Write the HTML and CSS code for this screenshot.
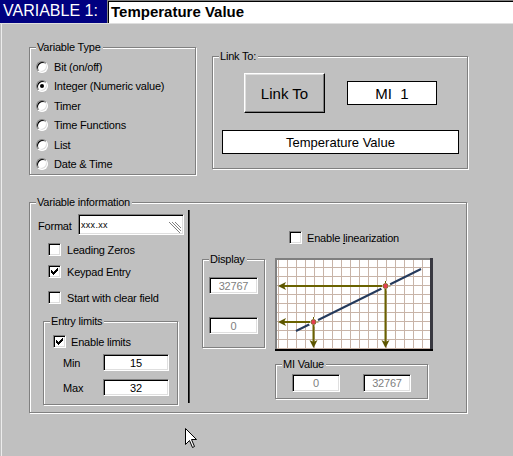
FILE: index.html
```html
<!DOCTYPE html>
<html lang="en">
<head>
  <meta charset="UTF-8" />
  <title>Variable 1</title>
  <link rel="stylesheet" href="styles.css">
</head>
<body>

  <div class="titlebar">
    <div class="title-tag">VARIABLE 1:</div>
    <div class="title-field">Temperature Value</div>
  </div>

  <div class="panel">
    <div class="top-row">
      <div class="group type-group">
        <span class="group-label">Variable Type</span>
        <div class="radio-list">
          <div class="radio-row"><span class="radio"></span>Bit (on/off)</div>
          <div class="radio-row"><span class="radio checked"></span>Integer (Numeric value)</div>
          <div class="radio-row"><span class="radio"></span>Timer</div>
          <div class="radio-row"><span class="radio"></span>Time Functions</div>
          <div class="radio-row"><span class="radio"></span>List</div>
          <div class="radio-row"><span class="radio"></span>Date &amp; Time</div>
        </div>
      </div>

      <div class="group link-group">
        <span class="group-label">Link To:</span>
        <div class="link-row">
          <button class="btn">Link To</button>
          <div class="flat-field mi-field">MI  1</div>
        </div>
        <div class="flat-field name-field">Temperature Value</div>
      </div>
    </div>

    <div class="group info-group">
      <span class="group-label">Variable information</span>

      <div class="info-left">
        <div class="format-row">
          <span class="format-label">Format</span>
          <div class="sunken format-field">
            <span>xxx.xx</span>
            <svg class="grip" width="14" height="11" viewBox="0 0 14 11">
              <path d="M2 0L13 11M5 0L14 9M8 0L14 6" stroke="#808080" fill="none"/>
              <path d="M3 0L14 11M6 0L14 8" stroke="#fff" fill="none"/>
            </svg>
          </div>
        </div>

        <div class="check-row opt-leading">
          <span class="check"></span><span>Leading Zeros</span>
        </div>
        <div class="check-row opt-keypad">
          <span class="check"><svg width="7" height="7" viewBox="0 0 7 7"><path d="M6 0h1v1h-1zM5 1h2v1h-2zM0 2h1v1h-1zM4 2h3v1h-3zM0 3h2v1h-2zM3 3h3v1h-3zM0 4h5v1h-5zM1 5h3v1h-3zM2 6h1v1h-1z"/></svg></span><span>Keypad Entry</span>
        </div>
        <div class="check-row opt-clear">
          <span class="check"></span><span>Start with clear field</span>
        </div>

        <div class="group limits-group">
          <span class="group-label">Entry limits</span>
          <div class="check-row opt-limits">
            <span class="check"><svg width="7" height="7" viewBox="0 0 7 7"><path d="M6 0h1v1h-1zM5 1h2v1h-2zM0 2h1v1h-1zM4 2h3v1h-3zM0 3h2v1h-2zM3 3h3v1h-3zM0 4h5v1h-5zM1 5h3v1h-3zM2 6h1v1h-1z"/></svg></span><span>Enable limits</span>
          </div>
          <div class="limit-row">
            <span class="limit-label">Min</span>
            <div class="sunken limit-field">15</div>
          </div>
          <div class="limit-row">
            <span class="limit-label">Max</span>
            <div class="sunken limit-field">32</div>
          </div>
        </div>
      </div>

      <div class="separator"></div>

      <div class="info-right">
        <div class="check-row lin-row">
          <span class="check"></span><span>Enable <u>l</u>inearization</span>
        </div>

        <div class="chart-row">
          <div class="group display-group">
            <span class="group-label">Display</span>
            <div class="sunken disabled">32767</div>
            <div class="sunken disabled">0</div>
          </div>

          <div class="chart-col">
            <svg class="chart" width="158" height="93" viewBox="0 0 158 93">
              <defs>
                <pattern id="grid" x="3" y="0" width="9" height="9" patternUnits="userSpaceOnUse">
                  <path d="M0.5 0V9M0 0.5H9" stroke="#c8b4a8" fill="none"/>
                </pattern>
              </defs>
              <rect width="158" height="93" fill="#fff"/>
              <rect x="2" y="2" width="153" height="89" fill="url(#grid)"/>
              <line x1="21" y1="73" x2="146" y2="11" stroke="#243a5c" stroke-width="2"/>
              <circle cx="110.5" cy="28" r="5" fill="#fff"/>
              <circle cx="38.5" cy="64" r="5" fill="#fff"/>
              <path d="M9 28H107M110.5 31V84M9 64H35M38.5 67V84" stroke="#6a6200" stroke-width="2" fill="none"/>
              <g fill="#5c5600">
                <path d="M3 28L11 24L9 28L11 32Z"/>
                <path d="M3 64L11 60L9 64L11 68Z"/>
                <path d="M110.5 90L106.5 82L110.5 84L114.5 82Z"/>
                <path d="M38.5 90L34.5 82L38.5 84L42.5 82Z"/>
              </g>
              <path d="M110.5 23V25M110.5 31V33M105.5 28H107.5M113.5 28H115.5M38.5 59V61M38.5 67V69M33.5 64H35.5M41.5 64H43.5" stroke="#6a6200" fill="none"/>
              <circle cx="110.5" cy="28" r="2.5" fill="#e83c50" stroke="#8a6a30"/>
              <circle cx="38.5" cy="64" r="2.5" fill="#e83c50" stroke="#8a6a30"/>
              <rect x="0" y="0" width="158" height="2" fill="#808080"/>
              <rect x="0" y="0" width="2" height="93" fill="#808080"/>
              <rect x="155" y="0" width="3" height="93" fill="#383840"/>
              <rect x="0" y="91" width="158" height="2" fill="#000"/>
            </svg>

            <div class="group mi-group">
              <span class="group-label">MI Value</span>
              <div class="sunken disabled">0</div>
              <div class="sunken disabled">32767</div>
            </div>
          </div>
        </div>
      </div>
    </div>
  </div>

  <svg class="cursor" width="13" height="21" viewBox="0 0 13 21">
    <path d="M0.5 0.5V16.5L4.5 12.5L7.5 19.5L9.5 18.5L6.5 11.5H11.5Z" fill="#fff" stroke="#000"/>
  </svg>

</body>
</html>
```

FILE: styles.css
```css
* {
  box-sizing: border-box;
}
body {
  margin: 0;
  width: 513px;
  height: 456px;
  overflow: hidden;
  position: relative;
  background: #c0c0c0;
  color: #000;
  font-family: "Liberation Sans", Arial, sans-serif;
  font-size: 11px;
  letter-spacing: -0.2px;
}

/* header */
.titlebar {
  display: flex;
  height: 24px;
  border-bottom: 1px solid #dfdfdf;
}
.title-tag {
  width: 107px;
  padding-left: 3px;
  background: #000080;
  color: #fff;
  font-size: 16px;
  line-height: 21px;
  letter-spacing: 0;
}
.title-field {
  flex: 1;
  padding-left: 3px;
  background: #fff;
  border-top: 1px solid #808080;
  border-left: 1px solid #808080;
  box-shadow: inset 1px 1px 0 #000;
  font-size: 15px;
  font-weight: bold;
  line-height: 21px;
  letter-spacing: 0;
}

.panel {
  height: 432px;
  padding: 23px 0 0 29px;
  box-shadow: inset 1px 0 0 #c0c0c0, inset 2px 0 0 #ececec;
}

/* etched group boxes */
.group {
  position: relative;
  flex: none;
  border: 1px solid #808080;
  box-shadow: 1px 1px 0 #fff, inset 1px 1px 0 #fff;
}
.group-label {
  position: absolute;
  top: -7px;
  left: 6px;
  padding: 0 2px 0 1px;
  background: #c0c0c0;
  line-height: 13px;
  white-space: nowrap;
}

.top-row {
  display: flex;
  align-items: flex-start;
}
.type-group {
  width: 167px;
  height: 128px;
}
.link-group {
  width: 256px;
  height: 113px;
  margin: 9px 0 0 16px;
}

/* radios */
.radio-list {
  padding: 9px 0 0 6px;
}
.radio-row {
  display: flex;
  align-items: center;
  height: 19.5px;
}
.radio {
  position: relative;
  flex: none;
  width: 12px;
  height: 12px;
  margin-right: 6px;
  border-radius: 50%;
  background: #fff;
  border: 1px solid;
  border-color: #808080 #fff #fff #808080;
  box-shadow: inset 1px 1px 0 #000, inset -1px -1px 0 #dfdfdf;
}
.radio.checked::after {
  content: "";
  position: absolute;
  left: 3px;
  top: 3px;
  width: 4px;
  height: 4px;
  border-radius: 50%;
  background: #000;
}

/* checkboxes */
.check-row {
  display: flex;
  align-items: center;
  gap: 6px;
  height: 13px;
  padding-left: 18px;
  white-space: nowrap;
}
.check {
  flex: none;
  display: flex;
  align-items: center;
  justify-content: center;
  width: 13px;
  height: 13px;
  background: #fff;
  border: 1px solid;
  border-color: #808080 #fff #fff #808080;
  box-shadow: inset 1px 1px 0 #000, inset -1px -1px 0 #dfdfdf;
}
.check svg {
  display: block;
  shape-rendering: crispEdges;
}

/* fields */
.sunken {
  display: flex;
  align-items: center;
  justify-content: center;
  background: #fff;
  border: 1px solid;
  border-color: #808080 #fff #fff #808080;
  box-shadow: inset 1px 1px 0 #000, inset -1px -1px 0 #dfdfdf;
}
.sunken.disabled {
  color: #808080;
}
.flat-field {
  display: flex;
  align-items: center;
  justify-content: center;
  background: #fff;
  border: 1px solid #000;
  white-space: pre;
  letter-spacing: 0;
}

.btn {
  width: 81px;
  height: 40px;
  padding: 0;
  background: #c0c0c0;
  border: 1px solid;
  border-color: #fff #000 #000 #fff;
  box-shadow: inset -1px -1px 0 #808080, inset 1px 1px 0 #dfdfdf;
  color: #000;
  font: 15px "Liberation Sans", Arial, sans-serif;
}

.link-row {
  display: flex;
  align-items: center;
  margin-top: 16px;
  padding-left: 31px;
}
.mi-field {
  width: 90px;
  height: 24px;
  margin-left: 22px;
  font-size: 15px;
}
.name-field {
  width: 237px;
  height: 24px;
  margin: 17px 0 0 9px;
  font-size: 13px;
}

/* variable information */
.info-group {
  display: flex;
  align-items: flex-start;
  width: 438px;
  height: 211px;
  margin-top: 27px;
}
.info-left {
  flex: none;
  width: 158px;
}
.format-row {
  display: flex;
  align-items: center;
  height: 21px;
  margin-top: 11px;
  padding-left: 8px;
}
.format-label {
  width: 40px;
  padding-top: 2px;
}
.format-field {
  width: 106px;
  height: 21px;
  justify-content: space-between;
  padding: 0 2px;
  font-size: 9px;
  letter-spacing: 0.3px;
}
.grip {
  display: block;
  align-self: flex-end;
  margin-bottom: 1px;
}
.opt-leading {
  margin-top: 8px;
}
.opt-keypad {
  margin-top: 9px;
}
.opt-clear {
  margin-top: 13px;
}

.limits-group {
  width: 135px;
  height: 84px;
  margin: 17px 0 0 13px;
}
.opt-limits {
  margin-top: 13px;
  padding-left: 9px;
  gap: 5px;
}
.limit-row {
  display: flex;
  align-items: center;
  margin-top: 6px;
  padding-left: 19px;
}
.limit-row + .limit-row {
  margin-top: 8px;
}
.limit-label {
  width: 40px;
}
.limit-field {
  width: 66px;
  height: 17px;
}

.separator {
  flex: none;
  width: 2px;
  height: 193px;
  margin-top: 7px;
  background: #404040;
  border-left: 1px solid #000;
}

.info-right {
  flex: 1;
}
.lin-row {
  margin-top: 28px;
  padding-left: 99px;
  gap: 5px;
}
.chart-row {
  display: flex;
  align-items: flex-start;
  margin-top: 14px;
  padding-left: 12px;
}
.display-group {
  width: 63px;
  height: 89px;
  margin-top: 1px;
}
.display-group .sunken {
  width: 49px;
  height: 17px;
  margin: 17px 0 0 6px;
}
.display-group .sunken + .sunken {
  margin-top: 23px;
}
.chart-col {
  margin-left: 10px;
}
.chart {
  display: block;
}
.mi-group {
  display: flex;
  gap: 23px;
  width: 153px;
  height: 35px;
  margin-top: 13px;
  padding: 9px 0 0 16px;
}
.mi-group .sunken {
  width: 48px;
  height: 18px;
}

.cursor {
  position: absolute;
  left: 185px;
  top: 428px;
}
```
